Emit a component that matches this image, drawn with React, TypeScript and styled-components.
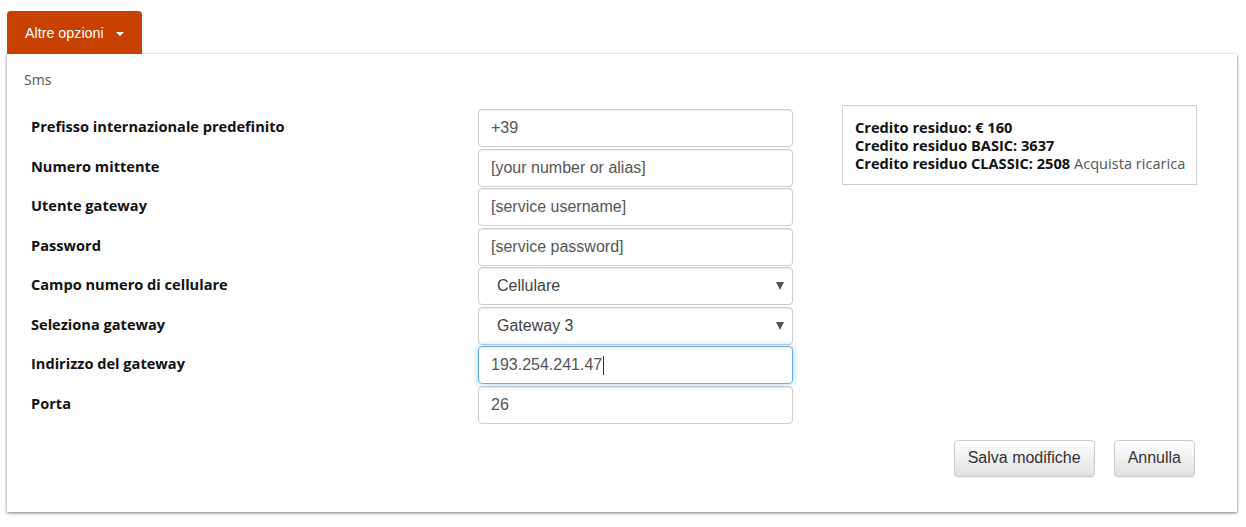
import React from 'react'
import styled, { createGlobalStyle } from 'styled-components'

const GlobalStyle = createGlobalStyle`
  body {
    margin: 0;
    background: #fff;
    font-family: "Open Sans", Arial, sans-serif;
  }
`

interface InputProps {
  focused?: boolean
}

const Page = styled.div`
  display: flex;
  flex-direction: column;
  align-items: stretch;
  padding: 11px 9px 15px 7px;
`

const TabBar = styled.div`
  display: flex;
  position: relative;
  z-index: 1;
`

const Tab = styled.div`
  display: flex;
  align-items: center;
  gap: 12px;
  height: 43px;
  padding: 0 18px;
  box-sizing: border-box;
  background-color: #c94100;
  border-radius: 4px 4px 0 0;
  color: #fff;
  font-family: "Liberation Sans", Arial, sans-serif;
  font-size: 14.3px;
`

const Caret = styled.span`
  width: 0;
  height: 0;
  margin-top: 2px;
  border-left: 4px solid transparent;
  border-right: 4px solid transparent;
  border-top: 4px solid #fff;
`

const Panel = styled.div`
  padding: 16px 40px 35px 17px;
  background: #fff;
  box-shadow: 0 1px 3px rgba(0, 0, 0, 0.55);
`

const PanelTitle = styled.div`
  font-size: 14px;
  line-height: 20px;
  color: #555;
`

const Body = styled.div`
  display: flex;
  align-items: flex-start;
  margin-top: 15px;
`

const FormGrid = styled.div`
  display: grid;
  grid-template-columns: 447px 315px;
  row-gap: 1.5px;
  margin: 4px 0 0 7px;
`

const Label = styled.label`
  padding-top: 7px;
  font-size: 14.6px;
  font-weight: 700;
  line-height: 20px;
  color: #111;
`

const Input = styled.div<InputProps>`
  display: flex;
  align-items: center;
  height: 38px;
  box-sizing: border-box;
  padding: 0 12px;
  border: 1px solid ${props => props.focused ? '#66afe9' : '#ccc'};
  border-radius: 4px;
  box-shadow: ${props => props.focused
    ? 'inset 0 1px 1px rgba(0,0,0,.075), 0 0 6px rgba(102,175,233,.6)'
    : 'inset 0 1px 1px rgba(0,0,0,.075)'};
  font-family: "Liberation Sans", Arial, sans-serif;
  font-size: 16px;
  color: #555;
`

const Cursor = styled.span`
  width: 1px;
  height: 19px;
  margin-left: 1px;
  background: #333;
`

const Select = styled(Input)`
  justify-content: space-between;
  padding: 0 8px 0 18px;
  color: #444;
`

const SelectArrow = styled.span`
  width: 0;
  height: 0;
  border-left: 4px solid transparent;
  border-right: 4px solid transparent;
  border-top: 8px solid #555;
`

const CreditBox = styled.div`
  width: 355px;
  box-sizing: border-box;
  margin-left: 49px;
  padding: 12px;
  border: 1px solid #ccc;
  font-size: 14.6px;
  line-height: 18px;
  color: #111;
`

const CreditLine = styled.div`
  font-weight: 700;
  white-space: nowrap;
`

const BuyLink = styled.span`
  font-weight: 400;
  color: #555;
`

const Actions = styled.div`
  display: flex;
  justify-content: flex-end;
  gap: 19px;
  margin: 16px 2px 0 0;
`

const Button = styled.button`
  height: 37px;
  padding: 0 13px;
  border: 1px solid #ccc;
  border-radius: 4px;
  background: linear-gradient(#fff, #e0e0e0);
  box-shadow: inset 0 1px 0 rgba(255,255,255,.15), 0 1px 1px rgba(0,0,0,.075);
  font-family: "Liberation Sans", Arial, sans-serif;
  font-size: 16px;
  color: #333;
`

const fields: { label: string, value: string, kind?: 'select' | 'focus' }[] = [
  { label: 'Prefisso internazionale predefinito', value: '+39' },
  { label: 'Numero mittente', value: '[your number or alias]' },
  { label: 'Utente gateway', value: '[service username]' },
  { label: 'Password', value: '[service password]' },
  { label: 'Campo numero di cellulare', value: 'Cellulare', kind: 'select' },
  { label: 'Seleziona gateway', value: 'Gateway 3', kind: 'select' },
  { label: 'Indirizzo del gateway', value: '193.254.241.47', kind: 'focus' },
  { label: 'Porta', value: '26' },
]

const App = () => {
  return (
    <Page>
      <GlobalStyle />
      <TabBar>
        <Tab>
          Altre opzioni
          <Caret />
        </Tab>
      </TabBar>
      <Panel>
        <PanelTitle>Sms</PanelTitle>
        <Body>
          <FormGrid>
            {fields.map((f, i) => (
              <React.Fragment key={i}>
                <Label>{f.label}</Label>
                {f.kind === 'select' ? (
                  <Select>
                    {f.value}
                    <SelectArrow />
                  </Select>
                ) : (
                  <Input focused={f.kind === 'focus'}>
                    {f.value}
                    {f.kind === 'focus' && <Cursor />}
                  </Input>
                )}
              </React.Fragment>
            ))}
          </FormGrid>
          <CreditBox>
            <CreditLine>Credito residuo: € 160</CreditLine>
            <CreditLine>Credito residuo BASIC: 3637</CreditLine>
            <CreditLine>
              Credito residuo CLASSIC: 2508 <BuyLink>Acquista ricarica</BuyLink>
            </CreditLine>
          </CreditBox>
        </Body>
        <Actions>
          <Button>Salva modifiche</Button>
          <Button>Annulla</Button>
        </Actions>
      </Panel>
    </Page>
  )
}

export default App
